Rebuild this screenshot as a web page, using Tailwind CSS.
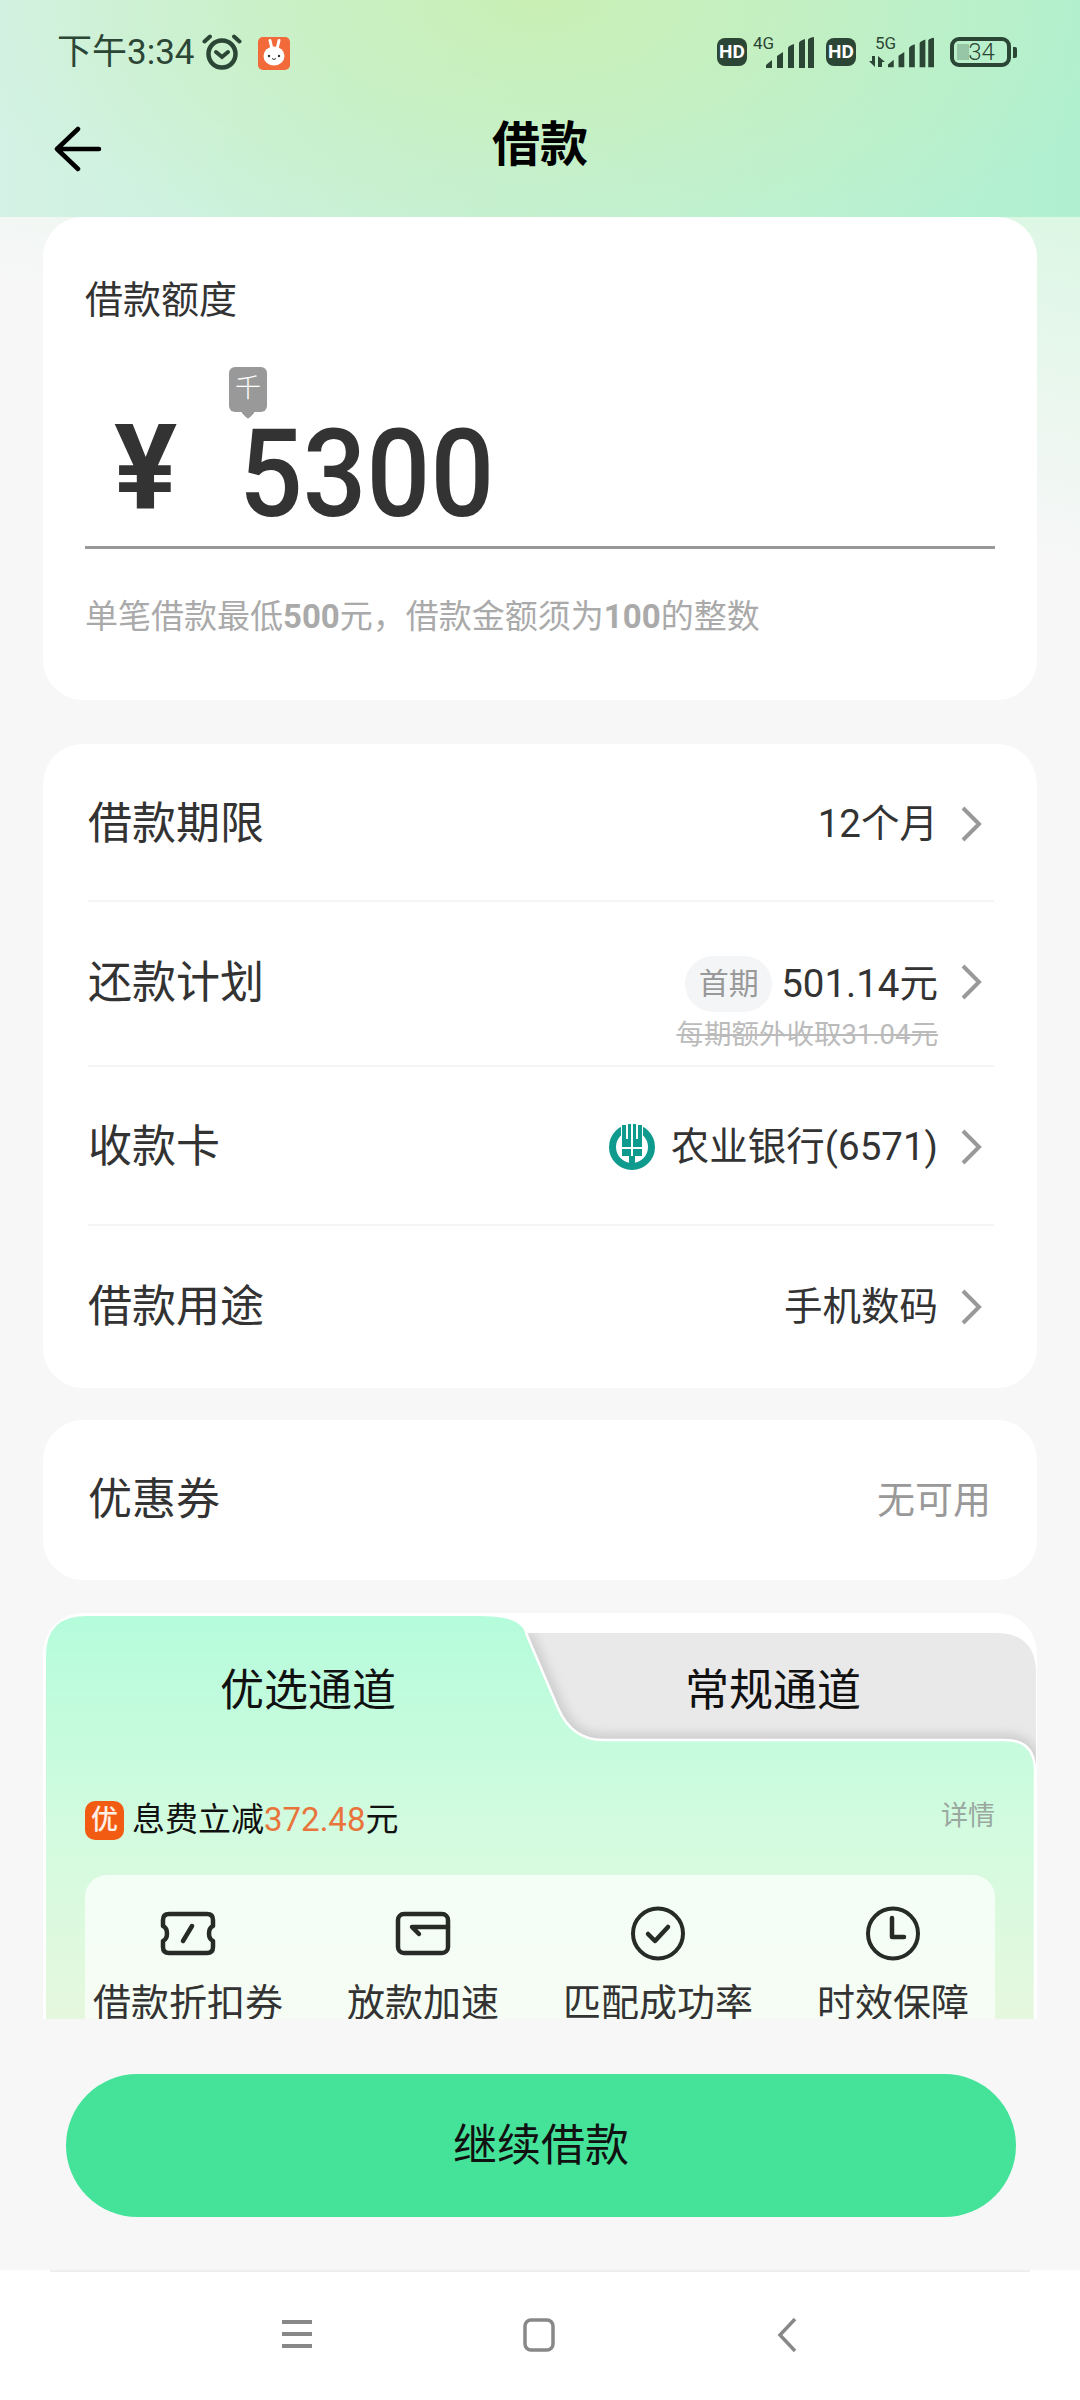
<!DOCTYPE html>
<html lang="zh-CN">
<head>
    <meta charset="UTF-8">
    <meta name="viewport" content="width=device-width, initial-scale=1.0">
    <title>借款</title>
    <script src="https://cdn.jsdelivr.net/npm/@tailwindcss/browser@4"></script>
</head>
<body class="bg-[#f7f7f8] font-['Roboto','Noto_Sans_CJK_SC',sans-serif] text-[#333]">
<div class="w-[1080px] h-[2400px] flex flex-col overflow-hidden">
    <!-- Header -->
    <header class="h-[217px] shrink-0 bg-[radial-gradient(ellipse_600px_300px_at_50%_0%,#c9efb4_0%,#c9efb400_100%),linear-gradient(90deg,#d4f2e5,#b0f0d0)]">
        <div class="h-[108px] pt-[36px] pl-[57px] pr-[63px] flex justify-between items-start text-[#2c4636]">
            <div class="flex items-center h-[34px]">
                <span class="text-[35px] leading-[34px]">下午3:34</span>
                <svg class="ml-[7px] mt-[-2px]" width="40" height="38" viewBox="0 0 40 38" fill="none" stroke="#2c4636" stroke-linecap="round">
                    <circle cx="20" cy="21" r="13.5" stroke-width="4.5"/>
                    <path d="M14 19l6 5 6-5" stroke-width="4"/>
                    <path d="M2.5 8.500L8 3.500M37.500 8.500L32 3.500" stroke-width="4"/>
                </svg>
                <svg class="ml-[16px]" width="32" height="33" viewBox="0 0 32 33">
                    <rect width="32" height="33" rx="5" fill="#f26a3a"/>
                    <path d="M14 12L12 3.500M19 12L21 3.500" stroke="#fff" stroke-width="3" stroke-linecap="round"/>
                    <ellipse cx="16" cy="19" rx="10.500" ry="9.500" fill="#fff"/>
                    <circle cx="11" cy="19" r="1.200" fill="#333"/>
                    <circle cx="21" cy="19" r="1.200" fill="#333"/>
                    <path d="M14 21.500q2 2 4 0" stroke="#333" fill="none"/>
                </svg>
            </div>
            <div class="flex items-start">
                <div class="w-[30px] h-[28px] mt-[2px] rounded-[8px] bg-[#2c4636] text-white text-[19px] leading-[28px] font-bold text-center">HD</div>
                <div class="relative w-[61px] h-[32px] ml-[6px]">
                    <span class="absolute left-0 top-[-3px] text-[17px] leading-[20px]">4G</span>
                    <svg class="absolute right-0 top-[1px]" width="48" height="31" viewBox="0 0 48 31" fill="#2c4636">
                        <path d="M0 31v-3l6-5v8zM11 31V19l6-4v16zM22 31V11q0-2 6-4v24zM33 31V6q0-2 6-4v29zM42 31V3q0-2 6-3v31z"/>
                    </svg>
                </div>
                <div class="w-[30px] h-[28px] mt-[2px] ml-[12px] rounded-[8px] bg-[#2c4636] text-white text-[19px] leading-[28px] font-bold text-center">HD</div>
                <div class="relative w-[65px] h-[32px] ml-[13px]">
                    <span class="absolute left-[6px] top-[-3px] text-[17px] leading-[20px]">5G</span>
                    <svg class="absolute left-0 top-[20px]" width="16" height="11" viewBox="0 0 16 11" fill="#2c4636">
                        <path d="M0 5h3V0h3v11zM9 0l7 6h-3v5h-4z"/>
                    </svg>
                    <svg class="absolute right-0 top-[1px]" width="46" height="31" viewBox="0 0 48 31" fill="#2c4636">
                        <path d="M0 31v-3l6-5v8zM11 31V19l6-4v16zM22 31V11q0-2 6-4v24zM33 31V6q0-2 6-4v29zM42 31V3q0-2 6-3v31z"/>
                    </svg>
                </div>
                <div class="relative w-[61px] h-[30px] ml-[16px] mt-[1px] rounded-[9px] border-[4px] border-[#2c4636] flex items-center justify-center text-[24px] leading-none font-light">
                    <div class="absolute left-[3px] top-[3px] bottom-[3px] w-[12px] bg-[#2c4636]/25"></div>
                    <span class="relative ml-[2px]">34</span>
                </div>
                <div class="w-[4px] h-[11px] ml-[2px] mt-[11px] rounded-r-[2px] bg-[#2c4636]"></div>
            </div>
        </div>
        <div class="relative flex justify-center items-start h-[74px]">
            <svg class="absolute left-[54px] top-[18px]" width="48" height="46" viewBox="0 0 48 46" fill="none" stroke="#000" stroke-width="4.500" stroke-linecap="round" stroke-linejoin="round">
                <path d="M45 23H3M24 3L3 23l21 20"/>
            </svg>
            <h1 class="mt-[3px] text-[48px] leading-[68px] font-bold text-black">借款</h1>
        </div>
    </header>

    <!-- Scrolling content -->
    <main class="h-[1802px] shrink-0 overflow-hidden px-[43px] flex flex-col bg-[linear-gradient(195deg,#dcf7e4_0px,#f7f7f8_340px)]">
        <!-- Amount -->
        <section class="h-[483px] shrink-0 bg-white rounded-[40px] px-[42px] pt-[59px]">
            <h2 class="text-[38px] leading-[48px]">借款额度</h2>
            <div class="relative h-[225px] border-b-[3px] border-[#999]">
                <span class="absolute left-[29px] top-[84px] text-[118px] leading-[120px] font-bold">¥</span>
                <span class="absolute left-[154px] top-[81px] text-[122px] leading-[140px] font-medium origin-left scale-x-[0.92]">5300</span>
                <div class="absolute left-[144px] top-[43px] w-[38px] h-[45px] rounded-[6px] bg-[#999] text-white text-[26px] leading-[42px] text-center font-light">千
                    <div class="absolute left-[14px] top-[40px] w-[10px] h-[10px] rotate-45 rounded-[2px] bg-[#999]"></div>
                </div>
            </div>
            <p class="mt-[46px] text-[33px] leading-[44px] text-[#aaa]">单笔借款最低<b class="font-bold">500</b>元，借款金额须为<b class="font-bold">100</b>的整数</p>
        </section>

        <!-- Loan options -->
        <section class="mt-[44px] h-[644px] shrink-0 bg-white rounded-[40px] pl-[45px] pr-[43px] flex flex-col">
            <div class="h-[158px] pt-[3px] border-b-2 border-[#f5f5f5] flex justify-between items-center">
                <span class="text-[44px] leading-[60px]">借款期限</span>
                <div class="flex items-center">
                    <span class="text-[38.5px] leading-[50px]">12个月</span>
                    <svg class="ml-[22px] mr-[12px]" width="22" height="36" viewBox="0 0 22 36" fill="none" stroke="#999" stroke-width="4"><path d="M3 2l16 16L3 34"/></svg>
                </div>
            </div>
            <div class="h-[165px] border-b-2 border-[#f5f5f5] flex justify-between items-start">
                <span class="mt-[51px] text-[44px] leading-[60px]">还款计划</span>
                <div class="mt-[54px] flex flex-col items-end pr-[56px]">
                    <div class="relative flex items-center h-[56px]">
                        <span class="w-[87px] h-[56px] rounded-[28px] bg-[#f4f5f7] text-[#999] text-[30px] leading-[56px] text-center">首期</span>
                        <span class="ml-[9px] text-[38.5px] leading-[50px]">501.14元</span>
                        <svg class="absolute right-[-44px] top-[8px]" width="22" height="36" viewBox="0 0 22 36" fill="none" stroke="#999" stroke-width="4"><path d="M3 2l16 16L3 34"/></svg>
                    </div>
                    <span class="mt-[5px] text-[27.5px] leading-[36px] text-[#bbb] line-through">每期额外收取31.04元</span>
                </div>
            </div>
            <div class="h-[159px] pt-[3px] border-b-2 border-[#f5f5f5] flex justify-between items-center">
                <span class="text-[44px] leading-[60px]">收款卡</span>
                <div class="flex items-center">
                    <svg class="mr-[16px]" width="46" height="46" viewBox="0 0 46 46">
                        <circle cx="23" cy="23" r="19.500" fill="none" stroke="#0f9a8e" stroke-width="7"/>
                        <rect x="12" y="0" width="22" height="15" fill="#fff"/>
                        <rect x="13" y="1" width="4" height="16" fill="#0f9a8e"/>
                        <rect x="29" y="1" width="4" height="16" fill="#0f9a8e"/>
                        <rect x="19" y="0" width="3" height="17" fill="#0f9a8e"/>
                        <rect x="24" y="0" width="3" height="17" fill="#0f9a8e"/>
                        <rect x="13" y="15" width="20" height="17" fill="#0f9a8e"/>
                        <rect x="13" y="23" width="20" height="2" fill="#fff"/>
                        <rect x="22" y="15" width="2" height="17" fill="#fff"/>
                        <rect x="20" y="32" width="6" height="12" fill="#0f9a8e"/>
                    </svg>
                    <span class="text-[38.5px] leading-[50px]">农业银行(6571)</span>
                    <svg class="ml-[22px] mr-[12px]" width="22" height="36" viewBox="0 0 22 36" fill="none" stroke="#999" stroke-width="4"><path d="M3 2l16 16L3 34"/></svg>
                </div>
            </div>
            <div class="flex-1 flex justify-between items-center">
                <span class="text-[44px] leading-[60px]">借款用途</span>
                <div class="flex items-center">
                    <span class="text-[38.5px] leading-[50px]">手机数码</span>
                    <svg class="ml-[22px] mr-[12px]" width="22" height="36" viewBox="0 0 22 36" fill="none" stroke="#999" stroke-width="4"><path d="M3 2l16 16L3 34"/></svg>
                </div>
            </div>
        </section>

        <!-- Coupon -->
        <section class="mt-[32px] h-[160px] shrink-0 bg-white rounded-[40px] pl-[45px] pr-[46px] flex justify-between items-center">
            <span class="text-[44px] leading-[60px]">优惠券</span>
            <span class="text-[38px] leading-[50px] text-[#999]">无可用</span>
        </section>

        <!-- Channels -->
        <section class="relative mt-[33px] h-[420px] shrink-0 bg-white rounded-t-[40px]">
            <svg class="absolute left-0 top-0" width="994" height="420" viewBox="0 0 994 420">
                <defs>
                    <linearGradient id="tabGreen" x1="0" y1="0" x2="0" y2="1">
                        <stop offset="0" stop-color="#b4fcdb"/>
                        <stop offset="0.5" stop-color="#d2fbdf"/>
                        <stop offset="1" stop-color="#e7f8df"/>
                    </linearGradient>
                    <filter id="tabShadow" x="-5%" y="-20%" width="110%" height="140%">
                        <feGaussianBlur stdDeviation="6"/>
                    </filter>
                    <clipPath id="greyClip"><path d="M440 20H953q40 0 40 40v110H440z"/></clipPath>
                </defs>
                <path d="M440 20H953q40 0 40 40v110H440z" fill="#e9e9ea"/>
                <g clip-path="url(#greyClip)">
                    <path d="M483 20L515 95C525 118 540 127 560 127H962Q991 127 992 156" fill="none" stroke="#c4c4c4" stroke-width="10" filter="url(#tabShadow)"/>
                </g>
                <path d="M3 420V43Q3 3 43 3H425C450 3 470 3 480 15L515 95C525 118 540 127 560 127H962Q991 127 992 156V420z" fill="url(#tabGreen)"/>
                <path d="M483 20L515 95C525 118 540 127 560 127H962Q991 127 992 156V420" fill="none" stroke="#fff" stroke-width="2.500"/>
            </svg>
            <div class="relative">
                <div class="flex h-[150px]">
                    <span class="ml-[177px] w-[176px] mt-[48px] text-[44px] leading-[60px] text-[#111] whitespace-nowrap">优选通道</span>
                    <span class="ml-[289px] w-[176px] mt-[48px] text-[44px] leading-[60px] text-[#111] whitespace-nowrap">常规通道</span>
                </div>
                <div class="flex justify-between items-start pl-[42px] pr-[42px] h-[112px]">
                    <div class="flex items-center mt-[35px]">
                        <span class="w-[39px] h-[39px] rounded-[10px] bg-[#f25c12] text-white/90 text-[27px] leading-[39px] text-center font-medium">优</span>
                        <span class="ml-[8px] text-[33px] leading-[44px] text-[#111] whitespace-nowrap">息费立减<span class="text-[#e8743c]">372.48</span>元</span>
                    </div>
                    <span class="mt-[35px] text-[27px] leading-[36px] text-[#9aa89f]">详情</span>
                </div>
                <div class="mx-[42px] h-[200px] rounded-t-[22px] bg-[linear-gradient(180deg,#f3fef7,#f7fcf2)] pt-[31px] pl-[8px] flex gap-[65px]">
                    <div class="w-[190px] flex flex-col items-center">
                        <svg width="56" height="55" viewBox="0 0 56 55" fill="none" stroke="#262b28" stroke-width="4.500" stroke-linecap="round" stroke-linejoin="round">
                            <path d="M9 8H47q6 0 6 6v6q-4 2-4 7.500t4 7.500v6q0 6-6 6H9q-6 0-6-6v-6q4-2 4-7.500T3 20v-6q0-6 6-6z"/>
                            <path d="M23 35l9-15"/>
                        </svg>
                        <span class="mt-[19px] text-[38px] leading-[46px] whitespace-nowrap">借款折扣券</span>
                    </div>
                    <div class="w-[150px] flex flex-col items-center">
                        <svg width="56" height="55" viewBox="0 0 56 55" fill="none" stroke="#262b28" stroke-width="4.500" stroke-linecap="round" stroke-linejoin="round">
                            <rect x="3" y="8" width="50" height="39" rx="6"/>
                            <path d="M53 21H17l7 7"/>
                        </svg>
                        <span class="mt-[19px] text-[38px] leading-[46px] whitespace-nowrap">放款加速</span>
                    </div>
                    <div class="w-[190px] flex flex-col items-center">
                        <svg width="56" height="55" viewBox="0 0 56 55" fill="none" stroke="#262b28" stroke-width="4" stroke-linecap="round" stroke-linejoin="round">
                            <circle cx="28" cy="27.500" r="25"/>
                            <path d="M18 28l7 7 13-14" stroke-width="4.500"/>
                        </svg>
                        <span class="mt-[19px] text-[38px] leading-[46px] whitespace-nowrap">匹配成功率</span>
                    </div>
                    <div class="w-[150px] flex flex-col items-center">
                        <svg width="56" height="55" viewBox="0 0 56 55" fill="none" stroke="#262b28" stroke-width="4" stroke-linecap="round" stroke-linejoin="round">
                            <circle cx="28" cy="27.500" r="25"/>
                            <path d="M27 12v19h12" stroke-width="4.500"/>
                        </svg>
                        <span class="mt-[19px] text-[38px] leading-[46px] whitespace-nowrap">时效保障</span>
                    </div>
                </div>
            </div>
        </section>
    </main>

    <!-- Continue button -->
    <div class="h-[251px] shrink-0 pl-[66px] pt-[55px]">
        <button class="w-[950px] h-[143px] rounded-full bg-[#45e39a] text-[44px] text-[#111]">继续借款</button>
    </div>

    <!-- System nav -->
    <nav class="flex-1 bg-white relative flex items-start pt-[48px] pl-[282px]">
        <div class="absolute left-[50px] right-[50px] top-0 h-[2px] bg-[#eee]"></div>
        <svg width="30" height="32" viewBox="0 0 30 32" fill="none" stroke="#888" stroke-width="4"><path d="M0 4h30M0 16h30M0 28h30"/></svg>
        <svg class="ml-[211px]" width="32" height="34" viewBox="0 0 32 34" fill="none" stroke="#888" stroke-width="3.500"><rect x="2" y="2" width="28" height="30" rx="6"/></svg>
        <svg class="ml-[222px]" width="20" height="34" viewBox="0 0 20 34" fill="none" stroke="#888" stroke-width="3.500"><path d="M18 1L3 17l15 16"/></svg>
    </nav>
</div>
</body>
</html>
